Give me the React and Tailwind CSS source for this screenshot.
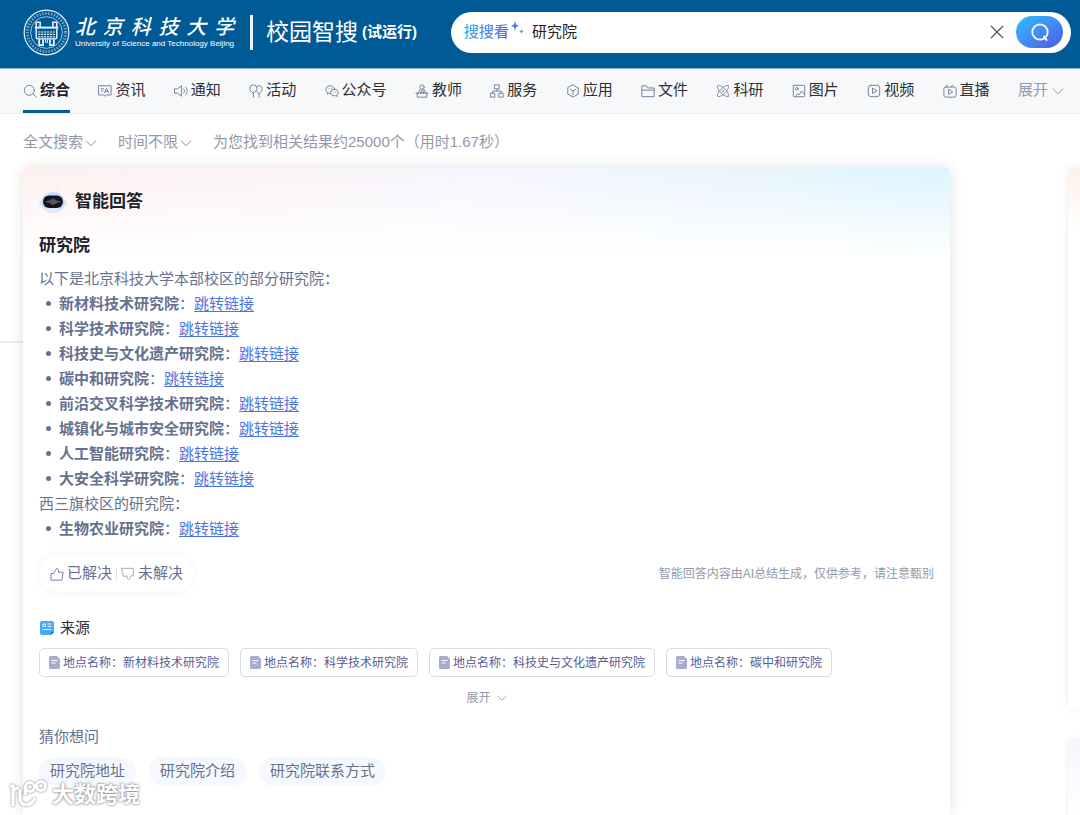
import React, { useState } from 'react';

const icons = {
    all: <><circle cx="7.2" cy="7.2" r="5.7" /><path d="M11.3 11.3L15 15" /></>,
    news: <><path d="M1 2h14v10.5H9.5L8 14l-1.500-1.500H1z" /><path d="M3.500 5.500h3M3.500 8h2M7.500 10l2.200-5 2.300 5M8.300 8.400h3" /></>,
    notice: <><path d="M1 5.500h3L8.500 2v12L4 10.500H1zM11 5.500c1.300 1.400 1.300 3.600 0 5M13.300 3.500c2.300 2.600 2.300 6.400 0 9" /></>,
    activity: <><path d="M5 10.500C2.500 9 1 7.200 1 5a4 4 0 0 1 8 0c0 2.200-1.500 4-4 5.500zM5 10.500V15M9.500 2.500a3.500 3.500 0 0 1 5.500 3c0 2.300-1.400 4.200-3.500 5.500C10 10.200 9 9.200 8.500 8M11.500 11v4" /></>,
    wechat: <><path d="M10.800 5.700C10.500 3.500 8.400 2 6 2 3.200 2 1 3.900 1 6.300c0 1.400.7 2.500 1.800 3.300L2.300 11.500l2.200-1.200 1.500.2" /><path d="M10.800 6c2.400 0 4.400 1.600 4.400 3.700 0 1.200-.6 2.200-1.600 2.900l.4 1.700-1.800-1-1.400.2c-2.500 0-4.400-1.700-4.400-3.800S8.300 6 10.800 6z" /><path d="M4.500 5h.1M7.500 5h.1M9.300 9h.1M12.200 9h.1" /></>,
    teacher: <><circle cx="8" cy="3.500" r="2.500" /><path d="M6 6L3.500 10M10 6l2.500 4M8 7l-2 3h4zM1 10.500h14M2.500 10.500V15h11v-4.500" /></>,
    service: <><rect x="5.500" y="1" width="5" height="4.500" /><rect x="1" y="10.500" width="4.500" height="4.500" /><rect x="10.500" y="10.500" width="4.500" height="4.500" /><path d="M8 5.500V8M3.200 10.500V8h9.600v2.500" /></>,
    app: <><path d="M8 1l6 3.500v7L8 15l-6-3.500v-7z" /><path d="M4.800 6L8 8l3.200-2M8 8v4" /></>,
    file: <path d="M1 14V2h5l1.500 2.500H15V14zM1 7h14" />,
    science: <g strokeWidth=".9"><ellipse cx="8" cy="8" rx="8.600" ry="3.200" transform="rotate(45 8 8)" /><ellipse cx="8" cy="8" rx="8.600" ry="3.200" transform="rotate(-45 8 8)" /><circle cx="8" cy="8" r=".5" /></g>,
    image: <><rect x="1.500" y="1.500" width="13" height="13" rx="1" /><circle cx="5.500" cy="5.500" r="1.500" /><path d="M4 14l2.500-3 1.500 1.500L11 8l3.500 4" /></>,
    video: <><rect x="1.500" y="1.500" width="13" height="13" rx="3" /><path d="M6.300 5.200v5.600L11 8z" /></>,
    live: <><rect x="1" y="3.500" width="14" height="11.500" rx="2" /><path d="M6.300 6.500v5.300L10.800 9.200zM4.500 1v2.500M9 3.500L11.500 1" /></>,
    up: <path d="M1.500 7.500h2.500L7.500 1.500c2 .2 2.500 1.700 2 4.500H15l-1.500 9h-12z" />,
    down: <path d="M1 1.500h13v8.500h-2.500L9 14.500c-2-.2-2.200-2-1.800-4H3z" />,
};

const Icon = ({ name, className = "w-3.5 h-3.5 text-[#74809c]" }) => (
    <svg className={`shrink-0 ${className}`} viewBox="0 0 16 16" fill="none" stroke="currentColor" strokeWidth="1.100" strokeLinejoin="round" strokeLinecap="round">
        {icons[name]}
    </svg>
);

const Chevron = ({ className }) => (
    <svg className={className} viewBox="0 0 12 8" fill="none" stroke="currentColor" strokeWidth="1">
        <path d="M.7 1.500L6 6.700l5.300-5.200" />
    </svg>
);

const tabs = [
    ["all", "综合"],
    ["news", "资讯"],
    ["notice", "通知"],
    ["activity", "活动"],
    ["wechat", "公众号"],
    ["teacher", "教师"],
    ["service", "服务"],
    ["app", "应用"],
    ["file", "文件"],
    ["science", "科研"],
    ["image", "图片"],
    ["video", "视频"],
    ["live", "直播"],
];

const institutes = [
    "新材料技术研究院",
    "科学技术研究院",
    "科技史与文化遗产研究院",
    "碳中和研究院",
    "前沿交叉科学技术研究院",
    "城镇化与城市安全研究院",
    "人工智能研究院",
    "大安全科学研究院",
];

const sources = ["新材料技术研究院", "科学技术研究院", "科技史与文化遗产研究院", "碳中和研究院"];

const questions = ["研究院地址", "研究院介绍", "研究院联系方式"];

const Emblem = () => (
    <svg className="w-[47px] h-[47px] shrink-0" viewBox="0 0 48 48" fill="none" stroke="#e8f3fb">
        <circle cx="24" cy="24" r="22.800" strokeWidth="1.200" />
        <circle cx="24" cy="24" r="16.200" strokeWidth=".7" />
        <circle cx="24" cy="24" r="19.500" strokeWidth="3" strokeDasharray="1.300 1.700" opacity=".55" />
        {/* Tripod vessel */}
        <path d="M13.500 19v-5.500h4V19M30.500 19v-5.500h4V19" strokeWidth="1.600" />
        <path d="M12 19h24" strokeWidth="2" />
        <path d="M13.500 20v8.500c0 1.500 1 2 2.500 2h16c1.500 0 2.500-.5 2.500-2V20" strokeWidth="1.500" />
        <path d="M15.500 23.500h17M15.500 26h17M15.500 28.500h17" strokeWidth="1.200" strokeDasharray="2.200 .8" />
        <path d="M16.500 31v6h4v-6M27.500 31v6h4v-6" strokeWidth="1.800" />
        <path d="M23 31v3h2v-3" strokeWidth="1" />
    </svg>
);

const Robot = () => (
    <svg className="w-7 h-7 shrink-0" viewBox="0 0 28 28">
        <path d="M17 5l3-4" stroke="#dceafb" strokeWidth="1" />
        <ellipse cx="14" cy="15" rx="14" ry="5" fill="#dbe7fc" />
        <ellipse cx="14" cy="14.500" rx="11.500" ry="10.500" fill="#c4dcf8" />
        <ellipse cx="14" cy="21" rx="8" ry="4" fill="#dceafb" />
        <rect x="4" y="7.500" width="20" height="12.500" rx="6.200" fill="#14151c" />
        <path d="M8 13v1.500M10 12.500v2.500M12 11.500v4.500M14 10.500v6.500M16 11.500v4.500M18 12.500v2.500M20 13v1.500" stroke="#c9cdd6" strokeWidth=".7" />
    </svg>
);

const DocIcon = () => (
    <svg className="w-[11px] h-[13px] shrink-0" viewBox="0 0 11 13">
        <path d="M1.500 0H8l3 3v8.500a1.500 1.500 0 0 1-1.500 1.500h-8A1.500 1.500 0 0 1 0 11.500v-10A1.500 1.500 0 0 1 1.500 0z" fill="#a9abd0" />
        <path d="M2.500 4.500h6M2.500 7h4" stroke="#fff" strokeWidth="1" />
    </svg>
);

const InstituteItem = ({ name }) => (
    <li className="flex items-center">
        <span className="w-[5px] h-[5px] rounded-full bg-[#66718f] ml-[7px] mr-2" />
        <strong className="font-bold">{name}</strong>：
        <a href="#" className="text-[#4d74e0] underline underline-offset-2">跳转链接</a>
    </li>
);

const Header = () => {
    const [keyword, setKeyword] = useState("研究院");

    return (
        <header className="flex items-center h-[69px] bg-[#005a96] pl-[23px] pr-[9px] pb-1 border-b border-[#8db8d6]">
            <Emblem />
            <div className="ml-[5px] text-white">
                <div className="flex justify-between text-xl leading-6 font-medium italic">
                    {"北京科技大学".split("").map((c) => <span key={c}>{c}</span>)}
                </div>
                <div className="text-[8px] leading-[10px] whitespace-nowrap">University of Science and Technology Beijing</div>
            </div>
            <div className="w-[3px] h-[35px] bg-[#e8f3fb] ml-4 mr-[13px]" />
            <h1 className="flex items-center text-white whitespace-nowrap">
                <span className="text-[23px]">校园智搜</span>
                <span className="text-[15px] font-bold ml-1">(试运行)</span>
            </h1>
            <form className="flex flex-1 items-center h-[41px] bg-white rounded-full ml-[34px] pl-[13px] pr-2" onSubmit={(e) => e.preventDefault()}>
                <label htmlFor="keyword" className="text-[15px] font-medium text-transparent bg-clip-text bg-linear-to-r from-[#27b5f7] to-[#5861ee] whitespace-nowrap">
                    搜搜看
                </label>
                <svg className="w-[14px] h-[18px] mb-2 ml-px shrink-0" viewBox="0 0 14 18">
                    <path d="M5 2l1 3.500L9 7 6 8 5 12 4 8 1 7l3-1.500z" fill="#3478f6" />
                    <path d="M11.500 10l.7 1.800 1.500.7-1.500.7-.7 1.800-.7-1.800-1.500-.7 1.500-.7z" fill="#5b9cf8" />
                </svg>
                <input
                    id="keyword"
                    type="text"
                    value={keyword}
                    onChange={(e) => setKeyword(e.target.value)}
                    className="flex-1 min-w-0 ml-2 pt-px text-[15px] text-[#222] focus:outline-none"
                />
                <button type="button" aria-label="清空" onClick={() => setKeyword("")} className="mr-3">
                    <svg className="w-[14px] h-[14px]" viewBox="0 0 14 14" stroke="#555" strokeWidth="1.200">
                        <path d="M1 1l12 12M13 1L1 13" />
                    </svg>
                </button>
                <button type="submit" aria-label="搜索" className="flex items-center justify-center w-[47px] h-8 rounded-full bg-linear-to-br from-[#20c0fc] to-[#4d55e6]">
                    <svg className="w-5 h-5" viewBox="0 0 20 20" fill="none" stroke="#fff" strokeWidth="1.800" strokeLinecap="round">
                        <circle cx="10" cy="10" r="7.700" />
                        <path d="M14 14.500l2.500 3.500" />
                    </svg>
                </button>
            </form>
        </header>
    );
};

export default function App() {
    return (
        <div className="relative flex flex-col min-h-screen overflow-hidden bg-white text-[15px] text-[#66718f] font-['Liberation_Sans','Noto_Sans_CJK_SC',sans-serif]">
            <Header />

            {/* Category tabs */}
            <nav className="flex justify-between h-[45px] bg-[#f6f8fa] border-b border-[#eef1f4] pl-[23px] pr-4 whitespace-nowrap">
                {tabs.map(([icon, label], i) => (
                    <a
                        key={icon}
                        href="#"
                        className={i === 0
                            ? "flex items-center gap-[3px] pt-0.5 border-b-3 border-[#005a96] text-[#1d2129] font-bold"
                            : "flex items-center gap-[3px] pt-0.5 border-b-3 border-transparent text-[#2b2f36]"}
                    >
                        <Icon name={icon} />
                        {label}
                    </a>
                ))}
                <button type="button" className="flex items-center gap-1 pt-0.5 border-b-3 border-transparent text-[#9499ab]">
                    展开
                    <Chevron className="w-3 h-2" />
                </button>
            </nav>

            {/* Filters */}
            <div className="flex items-center h-[54px] pt-[3px] pl-[23px] text-[#9298aa] whitespace-nowrap">
                <button type="button" className="flex items-center gap-px">
                    全文搜索
                    <Chevron className="w-[14px] h-2" />
                </button>
                <button type="button" className="flex items-center gap-px ml-5">
                    时间不限
                    <Chevron className="w-[14px] h-2" />
                </button>
                <p className="ml-5">为您找到相关结果约25000个（用时1.67秒）</p>
            </div>

            <main className="relative flex flex-1 pl-[23px]">
                <div className="absolute left-0 top-[173px] w-[23px] h-0.5 bg-[#f6e9e1]" />

                <section className="relative flex-1 min-w-0 rounded-t bg-white shadow-[0_0_14px_rgba(0,0,0,0.12)]">
                    <div className="absolute inset-x-0 top-0 h-[90px] rounded-t bg-linear-to-r from-[#fff0ef] via-[#f7f6fe] to-[#dcf4ff]" />
                    <div className="absolute inset-x-0 top-0 h-[90px] bg-linear-to-b from-transparent to-white" />

                    <div className="relative px-4 pt-[17px] pb-7">
                        <div className="flex items-center gap-2 h-[34px]">
                            <Robot />
                            <h2 className="text-[17px] font-bold text-[#1d2129]">智能回答</h2>
                        </div>
                        <h3 className="mt-[15px] text-[17px] leading-6 font-bold text-[#1d2129]">研究院</h3>

                        <div className="mt-2 leading-[25px]">
                            <p>以下是北京科技大学本部校区的部分研究院：</p>
                            <ul>
                                {institutes.map((name) => <InstituteItem key={name} name={name} />)}
                            </ul>
                            <p>西三旗校区的研究院：</p>
                            <ul>
                                <InstituteItem name="生物农业研究院" />
                            </ul>
                        </div>

                        {/* Feedback */}
                        <div className="flex items-center justify-between mt-[14px]">
                            <div className="flex items-center h-[37px] px-[11px] rounded-full bg-white shadow-[0_0_8px_rgba(0,0,0,0.06)]">
                                <button type="button" className="flex items-center gap-[3px]">
                                    <Icon name="up" />
                                    已解决
                                </button>
                                <span className="w-px h-3 bg-[#dfe2e8] mx-1" />
                                <button type="button" className="flex items-center gap-[3px]">
                                    <Icon name="down" className="w-3.5 h-3.5 text-[#a5acbb]" />
                                    未解决
                                </button>
                            </div>
                            <p className="text-xs text-[#9298aa]">智能回答内容由AI总结生成，仅供参考，请注意甄别</p>
                        </div>

                        {/* Sources */}
                        <div className="flex items-center gap-1.5 h-6 mt-6 text-[#2b2f36]">
                            <svg className="w-[14px] h-[14px] ml-px" viewBox="0 0 14 14">
                                <path d="M2 0h10a2 2 0 0 1 2 2v9l-3 3H2a2 2 0 0 1-2-2V2a2 2 0 0 1 2-2z" fill="#4aa8fb" />
                                <path d="M11 14v-3h3z" fill="#1673e6" />
                                <path d="M3 3h2.500v2.500H3zM7.500 3h4M7.500 5.500h4M2.500 8.500h9" fill="none" stroke="#e7f4ff" />
                            </svg>
                            来源
                        </div>
                        <div className="flex flex-wrap gap-[11px] mt-2">
                            {sources.map((name) => (
                                <a key={name} href="#" className="flex items-center gap-[3px] h-[29px] px-[9px] border border-[#d9dbe6] rounded-[5px] text-xs text-[#585c94] whitespace-nowrap">
                                    <DocIcon />
                                    地点名称：{name}
                                </a>
                            ))}
                        </div>
                        <button type="button" className="flex items-center gap-1.5 h-5 mt-[11px] mx-auto text-xs text-[#9298aa]">
                            展开
                            <Chevron className="w-[10px] h-2" />
                        </button>

                        {/* Related questions */}
                        <p className="mt-[17px] leading-6">猜你想问</p>
                        <div className="flex flex-wrap gap-[13px] mt-2">
                            {questions.map((q) => (
                                <button key={q} type="button" className="h-[29px] px-[11px] rounded-full bg-[#f5f9ff]">{q}</button>
                            ))}
                        </div>
                    </div>
                </section>

                {/* Side panels, cut by the window edge */}
                <aside className="flex flex-col gap-[30px] w-3 ml-[118px] shrink-0">
                    <div className="h-[541px] rounded-l bg-linear-to-b from-[#fff0ea] to-white to-[62px] shadow-[0_0_8px_rgba(0,0,0,0.08)]" />
                    <div className="flex-1 rounded-tl bg-linear-to-b from-[#f5f5ff] to-white shadow-[0_0_6px_rgba(0,0,0,0.08)]" />
                </aside>
            </main>

            {/* Watermark */}
            <div className="absolute left-2 bottom-1 flex items-center gap-1 text-[22px] leading-7 font-bold text-white [text-shadow:0_0_3px_#888,0_0_2px_#999]">
                <svg className="w-10 h-8 drop-shadow-[0_0_1px_#777]" viewBox="0 0 40 32" fill="none" stroke="#fff" strokeWidth="3.200">
                    <path d="M2 7h3v20M5 13c1-3 3-4 6-4M12 10v9c0 9 11 9 15 0" />
                    <circle cx="22" cy="8" r="4.500" />
                    <circle cx="33" cy="7" r="4.500" />
                    <path d="M17.500 7v9" />
                </svg>
                大数跨境
            </div>
        </div>
    );
}
